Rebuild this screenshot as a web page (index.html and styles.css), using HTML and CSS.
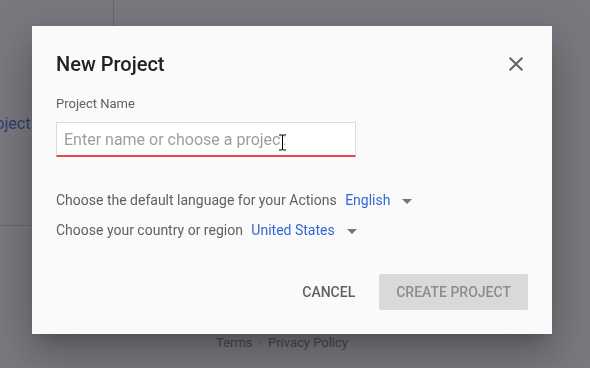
FILE: index.html
```html
<!DOCTYPE html>
<html lang="en">
<head>
    <meta charset="UTF-8">
    <meta name="viewport" content="width=device-width, initial-scale=1.0">
    <title>New Project</title>
    <link rel="stylesheet" href="styles.css">
</head>
<body>

    <div class="page">
        <div class="side">
            <a class="side-link" href="#">Project</a>
            <div class="side-rule"></div>
        </div>
        <div class="main"></div>
    </div>
    <p class="footer"><a href="#">Terms</a><span class="dot">·</span><a href="#">Privacy Policy</a></p>

    <div class="overlay">
        <div class="dialog">
            <div class="dialog-head">
                <h1 class="dialog-title">New Project</h1>
                <button class="close" aria-label="Close">
                    <svg width="24" height="24" viewBox="0 0 24 24"><path fill="#616161" d="M19 6.41L17.59 5 12 10.59 6.41 5 5 6.41 10.59 12 5 17.59 6.41 19 12 13.41 17.59 19 19 17.59 13.41 12z"/></svg>
                </button>
            </div>

            <label class="field-label" for="project-name">Project Name</label>
            <div class="field">
                <input id="project-name" class="field-input" type="text" placeholder="Enter name or choose a project">
                <svg class="ibeam" width="9" height="17" viewBox="0 0 9 17"><path d="M1 1h3M5 1h3M4.5 1v15M1 16h3M5 16h3" stroke="#fff" stroke-width="3" fill="none"/><path d="M1 1h3M5 1h3M4.5 1v15M1 16h3M5 16h3" stroke="#000" stroke-width="1" fill="none"/></svg>
            </div>

            <div class="options">
                <p class="option">Choose the default language for your Actions
                    <span class="pick">English<i class="caret"></i></span></p>
                <p class="option">Choose your country or region
                    <span class="pick">United States<i class="caret"></i></span></p>
            </div>

            <div class="actions">
                <button class="btn btn-flat">Cancel</button>
                <button class="btn btn-raised" disabled>Create Project</button>
            </div>
        </div>
    </div>

</body>
</html>
```

FILE: styles.css
```css
body { margin: 0; font-family: Roboto, "Liberation Sans", sans-serif; background: #fafbff; height: 368px; overflow: hidden; }
a { text-decoration: none; }

/* page behind the dialog */
.page { display: grid; grid-template-columns: 114px 1fr; height: 334px; }
.side { border-right: 1px solid #d6d8dc; padding-top: 112px; }
.side-link { display: block; margin-left: -20px; font-size: 16px; line-height: 24px; color: #5a85e6; white-space: nowrap; }
.side-rule { margin-top: 89px; border-bottom: 1px solid #d6d8dc; }
.footer { margin: 0; padding: 1px 0 0 216px; font-size: 13px; line-height: 16px; }
.footer a { color: #8f949a; }
.footer .dot { color: #8f949a; margin: 0 6px; }

/* dialog */
.overlay { position: fixed; top: 0; left: 0; right: 0; bottom: 0; background: rgba(1, 3, 11, 0.52); padding: 26px 0 0 32px; }
.dialog { width: 520px; height: 308px; box-sizing: border-box; padding: 24px; background: #fafafa; display: flex; flex-direction: column;
    box-shadow: 0 11px 15px -7px rgba(0,0,0,.2), 0 24px 38px 3px rgba(0,0,0,.14), 0 9px 46px 8px rgba(0,0,0,.12); }
.dialog-head { display: flex; justify-content: space-between; align-items: center; }
.dialog-title { margin: 0; font-size: 20px; line-height: 28px; font-weight: 500; color: #212121; }
.close { width: 24px; height: 24px; padding: 0; border: 0; background: none; display: flex; }

.field-label { margin-top: 18px; font-size: 13px; line-height: 16px; color: #616161; }
.field { margin-top: 10px; position: relative; width: 300px; }
.field-input { display: block; width: 300px; height: 35px; box-sizing: border-box; padding: 0 7px; border: 1px solid #dcdcdc; border-bottom: 2px solid #f2434a;
    background: #fff; font-family: Roboto, "Liberation Sans", sans-serif; font-size: 16px; color: #212121; outline: none; }
.field-input::placeholder { color: #9e9e9e; }
.ibeam { position: absolute; left: 222px; top: 12px; }

.options { margin-top: 28px; }
.option { margin: 0; font-size: 14px; line-height: 30px; color: #616161; }
.pick { color: #3367d6; margin-left: 5px; }
.caret { display: inline-block; margin-left: 12px; vertical-align: middle; border-left: 5px solid transparent; border-right: 5px solid transparent; border-top: 5px solid #757575; }

.actions { margin-top: auto; display: flex; justify-content: flex-end; }
.btn { height: 36px; padding: 0 16px; border: 0; border-radius: 2px; font-family: Roboto, "Liberation Sans", sans-serif; font-size: 14px; font-weight: 500; text-transform: uppercase; }
.btn-flat { background: none; color: #616161; margin-right: 8px; }
.btn-raised { background: #d9d9d9; color: #8c8c8c; padding: 0 17px; }
```
